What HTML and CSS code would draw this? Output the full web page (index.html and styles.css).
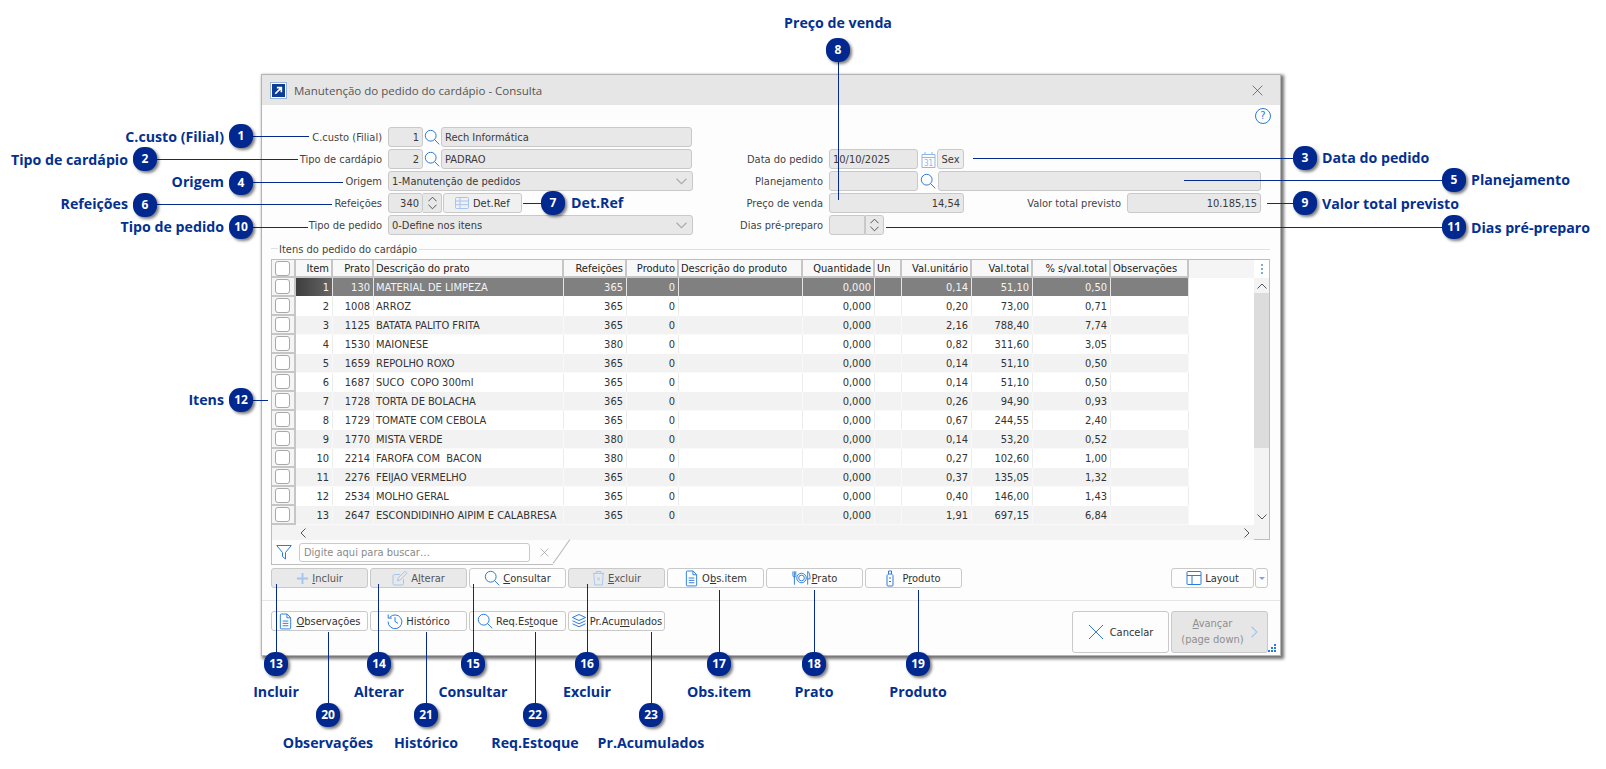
FILE: index.html
```html
<!DOCTYPE html>
<html lang="pt-BR">
<head>
<meta charset="utf-8">
<title>Manutenção do pedido do cardápio</title>
<link rel="stylesheet" href="styles.css">
</head>
<body>
<svg class="defs" width="0" height="0" aria-hidden="true">
  <symbol id="i-search" viewBox="0 0 16 16"><circle cx="6.7" cy="6.7" r="5.4"/><path d="M10.6 10.6l4.6 4.7"/></symbol>
  <symbol id="i-doc" viewBox="0 0 16 18"><path d="M3.5 1h6.2l3.8 3.9v11a1 1 0 0 1-1 1H3.500a1 1 0 0 1-1-1V2a1 1 0 0 1 1-1z"/><path d="M9.500 1v4h4M5 8.500h6M5 11h6M5 13.500h6"/></symbol>
  <symbol id="i-grid" viewBox="0 0 16 16"><rect x="1.500" y="2.500" width="13" height="11" rx="1"/><path d="M1.500 6h13M1.500 9.700h13M6 2.500v11"/></symbol>
  <symbol id="i-layout" viewBox="0 0 16 16"><rect x="1" y="1.500" width="14" height="13" rx="1"/><path d="M1 5.500h14M6 5.500v9"/></symbol>
  <symbol id="i-plus" viewBox="0 0 14 14"><path d="M7 1v12M1 7h12"/></symbol>
  <symbol id="i-edit" viewBox="0 0 16 16"><path d="M11.500 9v4.500a1.500 1.500 0 0 1-1.500 1.500H2.500A1.500 1.500 0 0 1 1 13.500V6a1.500 1.500 0 0 1 1.500-1.500H8"/><path d="M5.500 10.800l.7-2.800 6.800-6.800 2 2-6.800 6.800z"/></symbol>
  <symbol id="i-trash" viewBox="0 0 14 17"><path d="M1 3.500h12M4.500 3.500V1.500h5v2M2 3.500l.8 12.500h8.400L12 3.500M5.500 8l3 3M8.500 8l-3 3"/></symbol>
  <symbol id="i-history" viewBox="0 0 16 16"><path d="M2.700 4.400A6.900 6.900 0 1 1 1.100 8.600"/><path d="M1.200 1.500v3.600h3.600M8 4.200v4.300l3 1.800"/></symbol>
  <symbol id="i-layers" viewBox="0 0 16 16"><path d="M8 1.500l6.500 3-6.500 3-6.500-3zM1.500 7.800l6.500 3 6.500-3M1.500 10.800l6.500 3 6.500-3"/></symbol>
  <symbol id="i-plate" viewBox="0 0 20 16"><circle cx="10" cy="8" r="5"/><circle cx="10" cy="8" r="3"/><path d="M1 1v4.500a1.500 1.500 0 0 0 3 0V1M2.500 1v14M16.500 15V1c2 1 2.500 4 2.500 8h-2.500"/></symbol>
  <symbol id="i-bottle" viewBox="0 0 8 17"><path d="M2.500 1h3v3h-3zM2.500 4L1 5.500v9.500a1 1 0 0 0 1 1h4a1 1 0 0 0 1-1V5.500L5.500 4M3 8h2M3 11.500h2"/></symbol>
  <symbol id="i-funnel" viewBox="0 0 16 16"><path d="M.700 1.500h14.600L9.500 8.500v6.500l-3-2.500v-4z"/></symbol>
  <symbol id="i-x" viewBox="0 0 16 16"><path d="M1 1l14 14M15 1L1 15"/></symbol>
  <symbol id="i-down" viewBox="0 0 10 6"><path d="M.500.500L5 5 9.500.500"/></symbol>
  <symbol id="i-up" viewBox="0 0 10 6"><path d="M.500 5.500L5 1l4.500 4.500"/></symbol>
  <symbol id="i-left" viewBox="0 0 6 10"><path d="M5.500.500L1 5l4.500 4.500"/></symbol>
  <symbol id="i-right" viewBox="0 0 6 10"><path d="M.500.500L5 5 .500 9.500"/></symbol>
</svg>

<main class="window">
  <header class="titlebar">
    <span class="appicon"><svg class="appicon-svg" viewBox="0 0 16 16"><path d="M4 12l7-7M6 4.500h5.500V10"/></svg></span>
    <span class="title">Manutenção do pedido do cardápio - Consulta</span>
    <svg class="ic closex"><use href="#i-x"/></svg>
  </header>

  <div class="helprow">
    <span class="help">?</span>
  </div>

  <section class="form">
    <div class="col col-left">
      <div class="row">
        <label class="lbl lbl-l">C.custo (Filial)</label>
        <span class="fld f-code num">1</span>
        <svg class="ic lookup"><use href="#i-search"/></svg>
        <span class="fld f-name">Rech Informática</span>
      </div>
      <div class="row">
        <label class="lbl lbl-l">Tipo de cardápio</label>
        <span class="fld f-code num">2</span>
        <svg class="ic lookup"><use href="#i-search"/></svg>
        <span class="fld f-name">PADRAO</span>
      </div>
      <div class="row">
        <label class="lbl lbl-l">Origem</label>
        <span class="fld f-combo">1-Manutenção de pedidos<svg class="ic combo-arrow"><use href="#i-down"/></svg></span>
      </div>
      <div class="row">
        <label class="lbl lbl-l">Refeições</label>
        <span class="fld f-code num">340</span>
        <span class="spin"><svg class="ic spin-a"><use href="#i-up"/></svg><svg class="ic spin-a"><use href="#i-down"/></svg></span>
        <button class="btn btn-detref"><svg class="ic btn-ic ic16 light"><use href="#i-grid"/></svg>Det.Ref</button>
      </div>
      <div class="row">
        <label class="lbl lbl-l">Tipo de pedido</label>
        <span class="fld f-combo">0-Define nos itens<svg class="ic combo-arrow"><use href="#i-down"/></svg></span>
      </div>
    </div>
    <div class="col col-right">
      <div class="row">
        <label class="lbl lbl-r">Data do pedido</label>
        <span class="fld f-date">10/10/2025</span>
        <svg class="cal" viewBox="0 0 15 17"><path class="cal-l" d="M1 3.500h13v13H1zM1 6.500h13M4 1v3M11 1v3"/><text class="cal-t" x="7.500" y="14.500">31</text></svg>
        <span class="fld f-day">Sex</span>
      </div>
      <div class="row">
        <label class="lbl lbl-r">Planejamento</label>
        <span class="fld f-date"></span>
        <svg class="ic lookup lookup-r"><use href="#i-search"/></svg>
        <span class="fld f-plan"></span>
      </div>
      <div class="row">
        <label class="lbl lbl-r">Preço de venda</label>
        <span class="fld f-price num">14,54</span>
        <label class="lbl lbl-total">Valor total previsto</label>
        <span class="fld f-total num">10.185,15</span>
      </div>
      <div class="row">
        <label class="lbl lbl-r">Dias pré-preparo</label>
        <span class="fld f-days"></span>
        <span class="spin spin-days"><svg class="ic spin-a"><use href="#i-up"/></svg><svg class="ic spin-a"><use href="#i-down"/></svg></span>
      </div>
    </div>
  </section>

  <div class="legend"><span>Itens do pedido do cardápio</span></div>

  <section class="grid">
    <div class="grid-main">
      <div class="table-wrap">
        <table class="tbl">
          <colgroup>
            <col class="w-chk"><col class="w-item"><col class="w-prato"><col class="w-desc"><col class="w-ref"><col class="w-prod"><col class="w-dprod"><col class="w-qtd"><col class="w-un"><col class="w-vu"><col class="w-vt"><col class="w-pct"><col class="w-obs">
          </colgroup>
          <thead>
            <tr><th class="chk"><i class="box"></i></th><th class="r">Item</th><th class="r">Prato</th><th>Descrição do prato</th><th class="r">Refeições</th><th class="r">Produto</th><th>Descrição do produto</th><th class="r">Quantidade</th><th>Un</th><th class="r">Val.unitário</th><th class="r">Val.total</th><th class="r">% s/val.total</th><th>Observações</th></tr>
          </thead>
          <tbody>
            <tr class="sel"><td class="chk"><i class="box"></i></td><td class="r cur">1</td><td class="r">130</td><td>MATERIAL DE LIMPEZA</td><td class="r">365</td><td class="r">0</td><td></td><td class="r">0,000</td><td></td><td class="r">0,14</td><td class="r">51,10</td><td class="r">0,50</td><td></td></tr>
            <tr><td class="chk"><i class="box"></i></td><td class="r">2</td><td class="r">1008</td><td>ARROZ</td><td class="r">365</td><td class="r">0</td><td></td><td class="r">0,000</td><td></td><td class="r">0,20</td><td class="r">73,00</td><td class="r">0,71</td><td></td></tr>
            <tr><td class="chk"><i class="box"></i></td><td class="r">3</td><td class="r">1125</td><td>BATATA PALITO FRITA</td><td class="r">365</td><td class="r">0</td><td></td><td class="r">0,000</td><td></td><td class="r">2,16</td><td class="r">788,40</td><td class="r">7,74</td><td></td></tr>
            <tr><td class="chk"><i class="box"></i></td><td class="r">4</td><td class="r">1530</td><td>MAIONESE</td><td class="r">380</td><td class="r">0</td><td></td><td class="r">0,000</td><td></td><td class="r">0,82</td><td class="r">311,60</td><td class="r">3,05</td><td></td></tr>
            <tr><td class="chk"><i class="box"></i></td><td class="r">5</td><td class="r">1659</td><td>REPOLHO ROXO</td><td class="r">365</td><td class="r">0</td><td></td><td class="r">0,000</td><td></td><td class="r">0,14</td><td class="r">51,10</td><td class="r">0,50</td><td></td></tr>
            <tr><td class="chk"><i class="box"></i></td><td class="r">6</td><td class="r">1687</td><td>SUCO  COPO 300ml</td><td class="r">365</td><td class="r">0</td><td></td><td class="r">0,000</td><td></td><td class="r">0,14</td><td class="r">51,10</td><td class="r">0,50</td><td></td></tr>
            <tr><td class="chk"><i class="box"></i></td><td class="r">7</td><td class="r">1728</td><td>TORTA DE BOLACHA</td><td class="r">365</td><td class="r">0</td><td></td><td class="r">0,000</td><td></td><td class="r">0,26</td><td class="r">94,90</td><td class="r">0,93</td><td></td></tr>
            <tr><td class="chk"><i class="box"></i></td><td class="r">8</td><td class="r">1729</td><td>TOMATE COM CEBOLA</td><td class="r">365</td><td class="r">0</td><td></td><td class="r">0,000</td><td></td><td class="r">0,67</td><td class="r">244,55</td><td class="r">2,40</td><td></td></tr>
            <tr><td class="chk"><i class="box"></i></td><td class="r">9</td><td class="r">1770</td><td>MISTA VERDE</td><td class="r">380</td><td class="r">0</td><td></td><td class="r">0,000</td><td></td><td class="r">0,14</td><td class="r">53,20</td><td class="r">0,52</td><td></td></tr>
            <tr><td class="chk"><i class="box"></i></td><td class="r">10</td><td class="r">2214</td><td>FAROFA COM  BACON</td><td class="r">380</td><td class="r">0</td><td></td><td class="r">0,000</td><td></td><td class="r">0,27</td><td class="r">102,60</td><td class="r">1,00</td><td></td></tr>
            <tr><td class="chk"><i class="box"></i></td><td class="r">11</td><td class="r">2276</td><td>FEIJAO VERMELHO</td><td class="r">365</td><td class="r">0</td><td></td><td class="r">0,000</td><td></td><td class="r">0,37</td><td class="r">135,05</td><td class="r">1,32</td><td></td></tr>
            <tr><td class="chk"><i class="box"></i></td><td class="r">12</td><td class="r">2534</td><td>MOLHO GERAL</td><td class="r">365</td><td class="r">0</td><td></td><td class="r">0,000</td><td></td><td class="r">0,40</td><td class="r">146,00</td><td class="r">1,43</td><td></td></tr>
            <tr><td class="chk"><i class="box"></i></td><td class="r">13</td><td class="r">2647</td><td>ESCONDIDINHO AIPIM E CALABRESA</td><td class="r">365</td><td class="r">0</td><td></td><td class="r">0,000</td><td></td><td class="r">1,91</td><td class="r">697,15</td><td class="r">6,84</td><td></td></tr>
          </tbody>
        </table>
      </div>
      <div class="hscroll">
        <svg class="ic sb-h"><use href="#i-left"/></svg>
        <svg class="ic sb-h"><use href="#i-right"/></svg>
      </div>
    </div>
    <div class="vscroll">
      <div class="kebab"><i></i><i></i><i></i></div>
      <div class="sb-btn"><svg class="ic sb-v"><use href="#i-up"/></svg></div>
      <div class="thumb"></div>
      <div class="track"></div>
      <div class="sb-btn"><svg class="ic sb-v"><use href="#i-down"/></svg></div>
      <div class="corner"></div>
    </div>
  </section>

  <div class="filter">
    <svg class="ic funnel"><use href="#i-funnel"/></svg>
    <span class="search">Digite aqui para buscar…</span>
    <svg class="ic clear"><use href="#i-x"/></svg>
  </div>

  <div class="btnrow">
    <button class="btn act off"><svg class="ic btn-ic ic14 light thick"><use href="#i-plus"/></svg><span><u>I</u>ncluir</span></button>
    <button class="btn act off"><svg class="ic btn-ic ic16 light"><use href="#i-edit"/></svg><span>A<u>l</u>terar</span></button>
    <button class="btn act"><svg class="ic btn-ic ic16"><use href="#i-search"/></svg><span><u>C</u>onsultar</span></button>
    <button class="btn act off"><svg class="ic btn-ic i-trash light"><use href="#i-trash"/></svg><span><u>E</u>xcluir</span></button>
    <button class="btn act"><svg class="ic btn-ic i-doc"><use href="#i-doc"/></svg><span>O<u>b</u>s.item</span></button>
    <button class="btn act"><svg class="ic btn-ic i-plate"><use href="#i-plate"/></svg><span><u>P</u>rato</span></button>
    <button class="btn act"><svg class="ic btn-ic i-bottle"><use href="#i-bottle"/></svg><span>P<u>r</u>oduto</span></button>
    <button class="btn btn-layout"><svg class="ic btn-ic ic16"><use href="#i-layout"/></svg>Layout</button>
    <button class="btn btn-drop"><i class="tri"></i></button>
  </div>

  <div class="sep"></div>

  <footer class="footer">
    <button class="btn act"><svg class="ic btn-ic i-doc"><use href="#i-doc"/></svg><span><u>O</u>bservações</span></button>
    <button class="btn act"><svg class="ic btn-ic ic16"><use href="#i-history"/></svg><span>Histórico</span></button>
    <button class="btn act"><svg class="ic btn-ic ic16"><use href="#i-search"/></svg><span>Req.Es<u>t</u>oque</span></button>
    <button class="btn act"><svg class="ic btn-ic ic16"><use href="#i-layers"/></svg><span>Pr.Acu<u>m</u>ulados</span></button>
    <button class="btn big cancel"><svg class="ic x-big"><use href="#i-x"/></svg><span>Cancelar</span></button>
    <button class="btn big next"><span class="next-t"><u>A</u>vançar<br>(page down)</span><svg class="ic next-a"><use href="#i-right"/></svg></button>
  </footer>
  <i class="grip"></i>
</main>

<svg class="leaders" viewBox="0 0 1606 769" aria-hidden="true">
  <path d="M253 136.500H309M157 159.500H298M253 182.500H343M157 204.500H332M523 203.500H541M253 227.500H308M253 400.500H268"/>
  <path d="M838.500 62V200M973 158.500H1293M1184 180.500H1442M1267 203.500H1293M886 227.500H1442"/>
  <path d="M276.500 584V652M378.500 584V652M473.500 584V652M587.500 584V652M719.500 590V652M814.500 590V652M918.500 590V652"/>
  <path d="M328.500 632V703M426.500 632V703M535.500 632V703M651.500 632V703"/>
</svg>

<div class="badge n1">1</div><div class="tag tr t1">C.custo (Filial)</div>
<div class="badge n2">2</div><div class="tag tr t2">Tipo de cardápio</div>
<div class="badge n3">3</div><div class="tag t3">Data do pedido</div>
<div class="badge n4">4</div><div class="tag tr t4">Origem</div>
<div class="badge n5">5</div><div class="tag t5">Planejamento</div>
<div class="badge n6">6</div><div class="tag tr t6">Refeições</div>
<div class="badge n7">7</div><div class="tag t7">Det.Ref</div>
<div class="badge n8">8</div><div class="tag tc t8">Preço de venda</div>
<div class="badge n9">9</div><div class="tag t9">Valor total previsto</div>
<div class="badge n10">10</div><div class="tag tr t10">Tipo de pedido</div>
<div class="badge n11">11</div><div class="tag t11">Dias pré-preparo</div>
<div class="badge n12">12</div><div class="tag tr t12">Itens</div>
<div class="badge n13">13</div><div class="tag tc t13">Incluir</div>
<div class="badge n14">14</div><div class="tag tc t14">Alterar</div>
<div class="badge n15">15</div><div class="tag tc t15">Consultar</div>
<div class="badge n16">16</div><div class="tag tc t16">Excluir</div>
<div class="badge n17">17</div><div class="tag tc t17">Obs.item</div>
<div class="badge n18">18</div><div class="tag tc t18">Prato</div>
<div class="badge n19">19</div><div class="tag tc t19">Produto</div>
<div class="badge n20">20</div><div class="tag tc t20">Observações</div>
<div class="badge n21">21</div><div class="tag tc t21">Histórico</div>
<div class="badge n22">22</div><div class="tag tc t22">Req.Estoque</div>
<div class="badge n23">23</div><div class="tag tc t23">Pr.Acumulados</div>
</body>
</html>
```

FILE: styles.css
```css
* { box-sizing: border-box; }
html, body { margin: 0; padding: 0; }
body {
  position: relative;
  width: 1606px;
  height: 769px;
  overflow: hidden;
  background: #fff;
  font-family: "DejaVu Sans Condensed", "DejaVu Sans", sans-serif;
  font-stretch: condensed;
  font-size: 11px;
  color: #333;
}
.defs { position: absolute; }
.ic { fill: none; stroke: #2a7bdc; stroke-width: 1; display: block; flex: none; }
.light { stroke: #a4c6ee; }
.thick { stroke-width: 2; }

/* window */
.window {
  position: absolute;
  left: 261px;
  top: 74px;
  width: 1020px;
  height: 582px;
  background: #fdfdfd;
  border: 1px solid #b4b4b4;
  box-shadow: 2px 2px 3px 1px rgba(0, 0, 0, .55);
  display: flex;
  flex-direction: column;
}
.titlebar {
  height: 30px;
  flex: none;
  background: #e6e6e6;
  display: flex;
  align-items: center;
  padding: 0 17px 0 9px;
}
.appicon {
  width: 15px;
  height: 15px;
  background: #0c3c96;
  border: 1px solid #fff;
  outline: 1px solid #9db3d6;
  margin-right: 8px;
}
.appicon-svg { display: block; width: 13px; height: 13px; fill: none; stroke: #fff; stroke-width: 2; }
.title { flex: 1; font-family: "Open Sans", sans-serif; font-stretch: normal; font-size: 11.5px; color: #555; }
.closex { width: 11px; height: 11px; stroke: #444; }
.helprow {
  height: 22px;
  flex: none;
  display: flex;
  justify-content: flex-end;
  align-items: center;
  padding-right: 9px;
}
.help {
  width: 16px;
  height: 16px;
  border: 1px solid #2a7bdc;
  border-radius: 50%;
  color: #2a7bdc;
  font-size: 11px;
  line-height: 14px;
  text-align: center;
}

/* form */
.form { display: flex; flex: none; height: 108px; }
.col { display: flex; flex-direction: column; gap: 2px; }
.col-left { width: 431px; }
.col-right { padding-top: 22px; }
.row { display: flex; align-items: center; height: 20px; }
.lbl { text-align: right; color: #444; padding: 1px 6px 0 0; white-space: nowrap; flex: none; }
.lbl-l { width: 126px; }
.lbl-r { width: 136px; }
.lbl-total { width: 163px; }
.fld {
  height: 20px;
  background: #e8e8e8;
  border: 1px solid #c9c9c9;
  border-radius: 3px;
  line-height: 20px;
  padding: 0 3px;
  white-space: nowrap;
  flex: none;
  color: #3a3a3a;
}
.num { text-align: right; }
.f-code { width: 35px; }
.f-name { width: 251px; }
.f-combo { width: 305px; position: relative; }
.combo-arrow { position: absolute; right: 5px; top: 6px; width: 11px; height: 7px; stroke: #aaa; }
.lookup { width: 16px; height: 16px; margin: 0 1px; }
.lookup-r { margin: 0 2px 0 2px; }
.spin {
  width: 19px;
  height: 20px;
  flex: none;
  background: #e8e8e8;
  border: 1px solid #c9c9c9;
  border-left: 0;
  border-radius: 0 3px 3px 0;
  display: flex;
  flex-direction: column;
  align-items: center;
  justify-content: center;
  gap: 2px;
}
.spin-a { width: 9px; height: 6px; stroke: #444; }
.f-date { width: 89px; }
.cal { width: 15px; height: 17px; margin: 0 1px 0 3px; flex: none; }
.cal-l { fill: none; stroke: #8db8ea; }
.cal-t { font-size: 8px; text-anchor: middle; fill: #8db8ea; }
.f-day { width: 27px; text-align: center; padding: 0; background: #ededed; }
.f-plan { width: 323px; }
.f-price { width: 135px; }
.f-total { width: 134px; }
.f-days { width: 36px; border-radius: 3px 0 0 3px; }
.spin-days { border-left: 1px solid #c9c9c9; }

/* legend */
.legend {
  height: 12px;
  margin: 8px 10px 4px 9px;
  flex: none;
  display: flex;
  align-items: center;
  gap: 2px;
  color: #444;
  padding-left: 8px;
  position: relative;
}
.legend::before { content: ""; position: absolute; left: 0; width: 7px; top: 5px; border-top: 1px solid #e0e0e0; }
.legend::after { content: ""; flex: 1; border-top: 1px solid #e0e0e0; }

/* grid */
.grid {
  flex: none;
  height: 281px;
  margin: 0 10px 0 9px;
  border: 1px solid #bdbdbd;
  display: flex;
  background: #fff;
}
.grid-main { flex: 1; display: flex; flex-direction: column; min-width: 0; }
.table-wrap { flex: 1; background: linear-gradient(#f5f5f5 0 18px, #fff 18px); }
.tbl { width: 917px; table-layout: fixed; border-collapse: separate; border-spacing: 0; color: #333; }
.w-chk { width: 24px; } .w-item { width: 37px; } .w-prato { width: 41px; } .w-desc { width: 190px; }
.w-ref { width: 63px; } .w-prod { width: 52px; } .w-dprod { width: 124px; } .w-qtd { width: 72px; }
.w-un { width: 27px; } .w-vu { width: 70px; } .w-vt { width: 61px; } .w-pct { width: 78px; } .w-obs { width: 78px; }
th {
  height: 18px;
  padding: 0 2px;
  font-weight: 400;
  text-align: left;
  color: #222;
  background: #f8f8f8;
  border-right: 2px solid #c6c6c6;
  border-bottom: 2px solid #c6c6c6;
  white-space: nowrap;
  overflow: hidden;
}
td {
  height: 19px;
  padding: 1px 3px 0 2px;
  background: #fff;
  border-right: 1px solid #ececec;
  border-bottom: 1px solid #fff;
  white-space: pre;
  overflow: hidden;
  line-height: 16px;
}
tbody tr:nth-child(odd) td { background: #f2f2f2; border-bottom-color: #fafafa; border-right-color: #f8f8f8; }
.r { text-align: right; }
th.chk, td.chk, tbody tr:nth-child(odd) td.chk {
  padding: 0 0 0 3px;
  background: #f5f5f5;
  border-right: 2px solid #c6c6c6;
  border-bottom: 2px solid #c6c6c6;
}
.box {
  display: block;
  width: 15px;
  height: 15px;
  background: #fff;
  border: 1px solid #a8a8a8;
  border-radius: 3px;
}
tbody tr.sel td { background: #808080; color: #f4f4f4; border-right-color: #e4e4e4; border-bottom-color: #fff; }
tbody tr.sel td.cur { background: linear-gradient(90deg, #3e3e3e, #666); }
tbody tr.sel td.chk { background: #f5f5f5; border-right-color: #c6c6c6; border-bottom-color: #c6c6c6; }
.hscroll {
  height: 15px;
  flex: none;
  background: #f3f3f3;
  display: flex;
  align-items: center;
  justify-content: space-between;
  padding: 0 4px 0 28px;
}
.sb-h { width: 6px; height: 10px; stroke: #555; }
.vscroll { width: 15px; flex: none; display: flex; flex-direction: column; background: #f3f3f3; }
.kebab { height: 18px; flex: none; background: #fff; display: flex; flex-direction: column; align-items: center; justify-content: center; gap: 2px; }
.kebab i { width: 2px; height: 2px; background: #7da9de; }
.sb-btn { height: 15px; flex: none; display: flex; align-items: center; justify-content: center; }
.sb-v { width: 10px; height: 6px; stroke: #555; }
.thumb { height: 155px; flex: none; background: #dcdcdc; }
.track { flex: 1; }
.corner { height: 15px; flex: none; }

/* filter */
.filter {
  flex: none;
  position: relative;
  width: 282px;
  height: 25px;
  margin-left: 9px;
  border-left: 1px solid #bdbdbd;
  border-bottom: 1px solid #bdbdbd;
  display: flex;
  align-items: center;
  padding-left: 4px;
}
.filter::after {
  content: "";
  position: absolute;
  right: -9px;
  top: -3px;
  height: 29px;
  border-left: 1px solid #bdbdbd;
  transform: rotate(35deg);
}
.funnel { width: 16px; height: 16px; }
.search {
  margin-left: 7px;
  width: 231px;
  height: 19px;
  border: 1px solid #c9c9c9;
  border-radius: 3px;
  padding: 0 4px;
  line-height: 17px;
  color: #8a8a8a;
  background: #fff;
}
.clear { width: 9px; height: 9px; stroke: #888; margin-left: 10px; }

/* buttons */
.btn {
  height: 20px;
  background: #fdfdfd;
  border: 1px solid #c9c9c9;
  border-radius: 3px;
  padding: 0;
  font: inherit;
  color: #333;
  display: flex;
  align-items: center;
  justify-content: center;
  gap: 3px;
  white-space: nowrap;
}
.act { width: 97px; flex: none; }
.off { background: #e9e9e9; color: #555; }
.btn-ic { flex: none; }
.ic14 { width: 13px; height: 13px; }
.ic16 { width: 16px; height: 16px; }
.i-trash { width: 13px; height: 16px; }
.i-doc { width: 15px; height: 17px; }
.i-plate { width: 19px; height: 16px; margin-right: -2px; }
.i-bottle { width: 8px; height: 17px; margin-right: 5px; }
.btn-detref { width: 79px; margin-left: 1px; background: #f0f0f0; flex: none; justify-content: flex-start; padding-left: 10px; }
.btnrow {
  flex: none;
  display: flex;
  gap: 2px;
  margin: 3px 12px 0 9px;
}
.btn-layout { width: 83px; margin-left: auto; }
.btn-drop { width: 13px; margin-left: -1px; }
.tri { width: 0; height: 0; border: 3px solid transparent; border-top-color: #7da7dc; border-bottom: 0; }
.sep { flex: none; height: 1px; margin-top: 12px; background: #e6e6e6; }
.footer {
  flex: none;
  display: flex;
  gap: 2px;
  align-items: flex-start;
  margin: 10px 12px 0 9px;
}
.big { width: 97px; height: 42px; }
.cancel { margin-left: auto; gap: 6px; }
.x-big { width: 16px; height: 16px; }
.next { background: #e6e6e6; color: #8f8f8f; gap: 7px; line-height: 16px; }
.next-t { text-align: center; }
.next-a { width: 7px; height: 14px; stroke: #a4c6ee; }
.grip {
  position: absolute;
  right: 7px;
  bottom: 3px;
  width: 2px;
  height: 2px;
  background: #2a7bdc;
  box-shadow: 3px 0 #2a7bdc, -3px 0 #2a7bdc, 0 -3px #2a7bdc, 3px -3px #2a7bdc, 3px -6px #2a7bdc;
}

/* callouts */
.leaders { position: absolute; left: 0; top: 0; width: 1606px; height: 769px; fill: none; stroke: #06298f; stroke-width: 1; pointer-events: none; shape-rendering: crispEdges; }
.badge {
  position: absolute;
  width: 24px;
  height: 24px;
  border-radius: 11px;
  background: #00288f;
  color: #fff;
  font-weight: 700;
  font-size: 12px;
  line-height: 24px;
  text-align: center;
  font-family: "Open Sans", sans-serif;
  font-stretch: normal;
  box-shadow: 2px 2px 3px rgba(0, 0, 0, .5);
}
.tag {
  position: absolute;
  height: 20px;
  line-height: 20px;
  font-family: "Open Sans", sans-serif;
  font-stretch: normal;
  font-size: 14.2px;
  font-weight: 700;
  color: #04308f;
  white-space: nowrap;
}
.tr { transform: translateX(-100%); }
.tc { transform: translateX(-50%); }
.n1 { left: 229px; top: 124px; } .t1 { left: 224px; top: 127px; }
.n2 { left: 133px; top: 147px; } .t2 { left: 128px; top: 150px; }
.n3 { left: 1293px; top: 146px; } .t3 { left: 1322px; top: 148px; }
.n4 { left: 229px; top: 171px; } .t4 { left: 224px; top: 172px; }
.n5 { left: 1442px; top: 168px; } .t5 { left: 1471px; top: 170px; }
.n6 { left: 133px; top: 193px; } .t6 { left: 128px; top: 194px; }
.n7 { left: 541px; top: 191px; } .t7 { left: 571px; top: 193px; }
.n8 { left: 826px; top: 38px; } .t8 { left: 838px; top: 13px; }
.n9 { left: 1293px; top: 191px; } .t9 { left: 1322px; top: 194px; }
.n10 { left: 229px; top: 215px; } .t10 { left: 224px; top: 217px; }
.n11 { left: 1442px; top: 215px; } .t11 { left: 1471px; top: 218px; }
.n12 { left: 229px; top: 388px; } .t12 { left: 224px; top: 390px; }
.n13 { left: 264px; top: 652px; } .t13 { left: 276px; top: 682px; }
.n14 { left: 367px; top: 652px; } .t14 { left: 379px; top: 682px; }
.n15 { left: 461px; top: 652px; } .t15 { left: 473px; top: 682px; }
.n16 { left: 575px; top: 652px; } .t16 { left: 587px; top: 682px; }
.n17 { left: 707px; top: 652px; } .t17 { left: 719px; top: 682px; }
.n18 { left: 802px; top: 652px; } .t18 { left: 814px; top: 682px; }
.n19 { left: 906px; top: 652px; } .t19 { left: 918px; top: 682px; }
.n20 { left: 316px; top: 703px; } .t20 { left: 328px; top: 733px; }
.n21 { left: 414px; top: 703px; } .t21 { left: 426px; top: 733px; }
.n22 { left: 523px; top: 703px; } .t22 { left: 535px; top: 733px; }
.n23 { left: 639px; top: 703px; } .t23 { left: 651px; top: 733px; }
```
